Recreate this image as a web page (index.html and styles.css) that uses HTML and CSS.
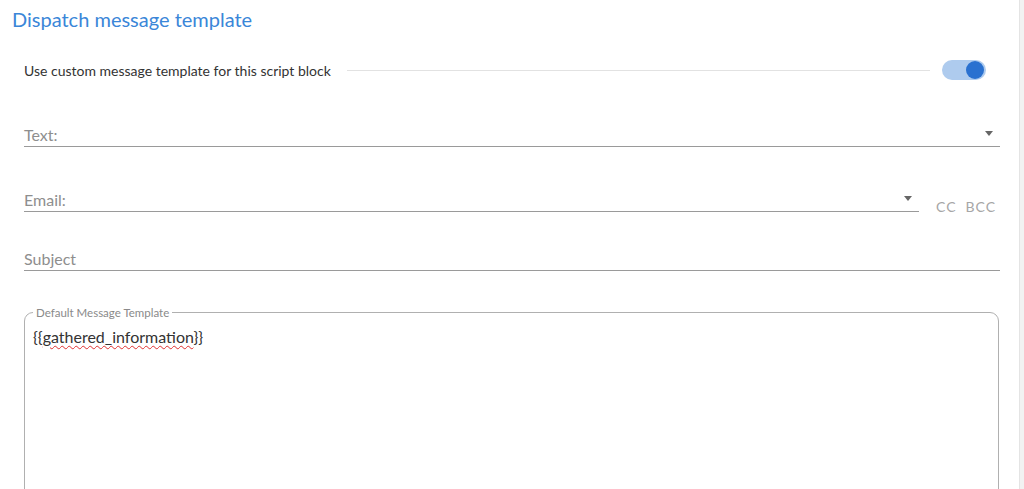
FILE: index.html
```html
<!DOCTYPE html>
<html lang="en">
<head>
    <meta charset="UTF-8">
    <title>Dispatch message template</title>
    <link rel="stylesheet" href="styles.css">
</head>
<body>

<div class="page">
    <div class="panel">
        <h2 class="title">Dispatch message template</h2>

        <div class="toggle-row">
            <span class="toggle-label">Use custom message template for this script block</span>
            <span class="toggle-line"></span>
            <span class="switch"><span class="knob"></span></span>
        </div>

        <div class="field field-text">
            <span class="field-label">Text:</span>
            <span class="caret"></span>
        </div>

        <div class="email-row">
            <div class="field field-email">
                <span class="field-label">Email:</span>
                <span class="caret"></span>
            </div>
            <span class="cc">CC</span>
            <span class="cc">BCC</span>
        </div>

        <div class="field field-subject">
            <span class="field-label">Subject</span>
        </div>

        <fieldset class="template">
            <legend>Default Message Template</legend>
            <div class="template-body">{{<span class="misspelled">gathered_information</span>}}</div>
        </fieldset>
    </div>
    <div class="scroll-strip"></div>
</div>

</body>
</html>
```

FILE: styles.css
```css
body {
    margin: 0;
    font-family: Lato, "Open Sans", sans-serif;
    background-color: #fff;
    overflow: hidden;
}

.page {
    display: flex;
    height: 489px;
}

.panel {
    flex: 1;
    padding: 0 0 0 12px;
}

.scroll-strip {
    width: 4px;
    background-color: #f2f2f2;
    border-left: 1px solid #e4e4e4;
}

.title {
    margin: 0;
    padding-top: 7px;
    font-size: 20px;
    font-weight: 400;
    color: #3a86d8;
    line-height: 24px;
}

.toggle-row {
    display: flex;
    align-items: center;
    margin: 27px 0 0 12px;
    width: 962px;
    height: 24px;
}

.toggle-label {
    font-size: 14px;
    color: #333;
}

.toggle-line {
    flex: 1;
    height: 1px;
    background-color: #e2e2e2;
    margin: 1px 12px 0 16px;
}

.switch {
    position: relative;
    width: 44px;
    height: 20px;
    border-radius: 10px;
    background-color: #aecbee;
}

.knob {
    position: absolute;
    right: 2px;
    top: 1px;
    width: 18px;
    height: 18px;
    border-radius: 50%;
    background-color: #2a71d0;
}

.field {
    display: flex;
    align-items: flex-end;
    justify-content: space-between;
    border-bottom: 1px solid #9a9a9a;
    height: 24px;
    margin-left: 12px;
}

.field-label {
    font-size: 16px;
    color: #8e8e8e;
    line-height: 20px;
    padding-bottom: 1px;
}

.caret {
    width: 0;
    height: 0;
    border-left: 4.5px solid transparent;
    border-right: 4.5px solid transparent;
    border-top: 5px solid #666;
    margin: 0 7px 10px 0;
}

.field-text {
    width: 976px;
    margin-top: 40px;
}

.email-row {
    display: flex;
    align-items: flex-end;
    margin-top: 40px;
}

.field-email {
    width: 895px;
}

.cc {
    font-size: 14px;
    color: #a6a6a6;
    letter-spacing: 1px;
    margin-left: 17px;
    line-height: 16px;
    margin-bottom: -3px;
}

.cc + .cc {
    margin-left: 9px;
}

.field-subject {
    width: 976px;
    margin-top: 34px;
}

.template {
    margin: 35px 0 0 12px;
    width: 975px;
    height: 200px;
    padding: 0 8px;
    border: 1px solid #b0b0b0;
    border-radius: 9px;
    box-sizing: border-box;
}

.template legend {
    font-size: 11.5px;
    color: #8a8a8a;
    padding: 0 3px;
    margin-left: 0;
}

.template-body {
    font-size: 16px;
    color: #333;
    padding-top: 8px;
}

.misspelled {
    text-decoration: underline wavy #e03030;
    text-decoration-thickness: 1px;
    text-underline-offset: 2px;
}
```
